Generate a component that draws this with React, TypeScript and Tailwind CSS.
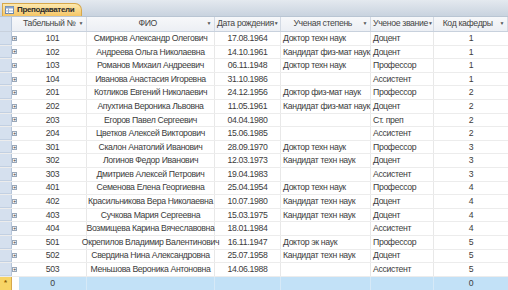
const ROWS = [
  ["101", "Смирнов Александр Олегович", "17.08.1964", "Доктор техн наук", "Доцент", "1"],
  ["102", "Андреева Ольга Николаевна", "14.10.1961", "Кандидат физ-мат наук", "Доцент", "1"],
  ["103", "Романов Михаил Андреевич", "06.11.1948", "Доктор техн наук", "Профессор", "1"],
  ["104", "Иванова Анастасия Игоревна", "31.10.1986", "", "Ассистент", "1"],
  ["201", "Котликов Евгений Николаевич", "24.12.1956", "Доктор физ-мат наук", "Профессор", "2"],
  ["202", "Апухтина Вероника Львовна", "11.05.1961", "Кандидат физ-мат наук", "Доцент", "2"],
  ["203", "Егоров Павел Сергеевич", "04.04.1980", "", "Ст. преп", "2"],
  ["204", "Цветков Алексей Викторович", "15.06.1985", "", "Ассистент", "2"],
  ["301", "Скалон Анатолий Иванович", "28.09.1970", "Доктор техн наук", "Профессор", "3"],
  ["302", "Логинов Федор Иванович", "12.03.1973", "Кандидат техн наук", "Доцент", "3"],
  ["303", "Дмитриев Алексей Петрович", "19.04.1983", "", "Ассистент", "3"],
  ["401", "Семенова Елена Георгиевна", "25.04.1954", "Доктор техн наук", "Профессор", "4"],
  ["402", "Красильникова Вера Николаевна", "10.07.1980", "Кандидат техн наук", "Доцент", "4"],
  ["403", "Сучкова Мария Сергеевна", "15.03.1975", "Кандидат техн наук", "Доцент", "4"],
  ["404", "Возмищева Карина Вячеславовна", "18.01.1984", "", "Ассистент", "4"],
  ["501", "Окрепилов Владимир Валентинович", "16.11.1947", "Доктор эк наук", "Профессор", "5"],
  ["502", "Свердина Нина Александровна", "25.07.1958", "Кандидат техн наук", "Доцент", "5"],
  ["503", "Меньшова Вероника Антоновна", "14.06.1988", "", "Ассистент", "5"],
];

const HEADERS = ["Табельный №", "ФИО", "Дата рождения", "Ученая степень", "Ученое звание", "Код кафедры"];

const GRID = "grid grid-cols-[12px_7px_68px_128px_66px_90px_63px_74px]";

function HeaderCell({ label }: { label: string }) {
  return (
    <div className="flex items-center border-r border-[#d3dae4] pl-[2px] pr-[3px]">
      <span className="flex-1 text-center whitespace-nowrap">{label}</span>
      <span className="text-[5px] text-[#555]">▼</span>
    </div>
  );
}

export default function App() {
  return (
    <div
      className="w-[508px] h-[290px] overflow-hidden bg-white text-[8.7px] tracking-[-0.35px] text-[#3c3c3c]"
      style={{ fontFamily: "'Liberation Sans', sans-serif" }}
    >
      {/* tab strip */}
      <div className="h-[17px] flex items-end pl-[2px] bg-gradient-to-b from-[#e4e9ef] to-[#c9d3df] border-b border-[#b9c5d3]">
        <div className="h-[13px] flex items-center gap-[3px] pl-[2px] pr-[7px] rounded-tr-[7px] bg-gradient-to-b from-[#fde9ad] to-[#f4c565] border border-b-0 border-[#d6a84c] text-[8px] font-bold text-[#2b2b2b]">
          <svg width="9" height="8" viewBox="0 0 9 8">
            <rect x="0.5" y="0.5" width="8" height="7" fill="#fff" stroke="#6a86ad" />
            <rect x="0.5" y="0.5" width="8" height="2" fill="#8ba6cc" />
            <line x1="0.5" y1="5" x2="8.5" y2="5" stroke="#9fb3cf" />
            <line x1="3.5" y1="2.5" x2="3.5" y2="7.5" stroke="#9fb3cf" />
          </svg>
          Преподаватели
        </div>
      </div>

      {/* header */}
      <div className={`${GRID} h-[15px] bg-gradient-to-b from-[#f7f8fa] to-[#eceff4] border-b border-[#c8d1dd] text-[#454545]`}>
        <div className="bg-[#d5e0ee] border-r border-[#b6c5d9]" />
        <div className="col-span-2 flex items-center border-r border-[#d3dae4] pl-[2px] pr-[3px]">
          <span className="flex-1 text-center pl-[6px] whitespace-nowrap">{HEADERS[0]}</span>
          <span className="text-[5px] text-[#555]">▼</span>
        </div>
        {HEADERS.slice(1).map((h) => (
          <HeaderCell key={h} label={h} />
        ))}
      </div>

      {/* rows */}
      {ROWS.map((r) => (
        <div key={r[0]} className={`${GRID} h-[13.6px] border-b border-[#ececec] leading-none`}>
          <div className="bg-[#d5e0ee] border-r border-[#b6c5d9] border-b border-b-[#c2d0e2]" />
          <div className="flex items-center justify-start">
            <span className="w-[5px] h-[5px] border border-[#9aa7b8] bg-[#f4f6f9] flex items-center justify-center text-[5px] leading-none text-[#333]">
              +
            </span>
          </div>
          <div className="flex items-center justify-center border-r border-[#e8e8e8]">{r[0]}</div>
          <div className="flex items-center justify-center border-r border-[#e8e8e8] whitespace-nowrap">{r[1]}</div>
          <div className="flex items-center justify-center border-r border-[#e8e8e8]">{r[2]}</div>
          <div className="flex items-center pl-[2px] border-r border-[#e8e8e8] whitespace-nowrap">{r[3]}</div>
          <div className="flex items-center pl-[2px] border-r border-[#e8e8e8]">{r[4]}</div>
          <div className="flex items-center justify-center">{r[5]}</div>
        </div>
      ))}

      {/* new record row */}
      <div className={`${GRID} h-[13.6px] leading-none`}>
        <div className="bg-[#f7d466] border-r border-[#d6a84c] flex items-center justify-center text-[8px] font-bold text-[#8a5a00]">
          *
        </div>
        <div className="bg-white" />
        <div className="bg-[#c2e1f7] flex items-center justify-center border-r border-[#d6e9f7]">0</div>
        <div className="bg-[#c2e1f7] border-r border-[#d6e9f7]" />
        <div className="bg-[#c2e1f7] border-r border-[#d6e9f7]" />
        <div className="bg-[#c2e1f7] border-r border-[#d6e9f7]" />
        <div className="bg-[#c2e1f7] border-r border-[#d6e9f7]" />
        <div className="bg-[#c2e1f7] flex items-center justify-center">0</div>
      </div>
    </div>
  );
}
